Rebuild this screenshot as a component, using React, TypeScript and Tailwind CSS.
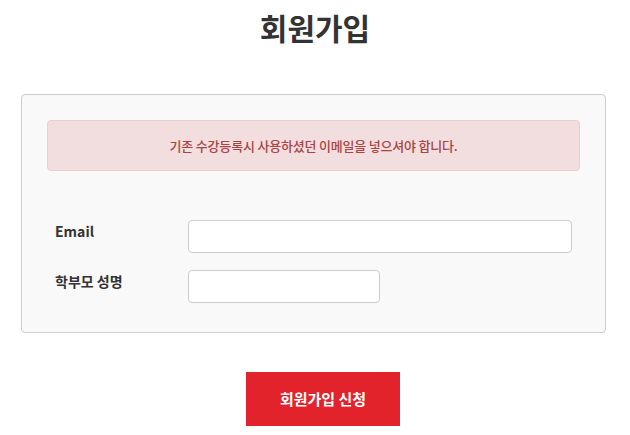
export default function App() {
  return (
    <div
      className="min-h-screen bg-white text-[#333]"
      style={{ fontFamily: '"Noto Sans CJK KR", "Noto Sans", sans-serif' }}
    >
      <h1 className="pt-[8px] text-center text-[30px] font-bold leading-[38px] text-[#333]">
        회원가입
      </h1>

      <div className="mx-[21px] mt-[48px] w-[585px] rounded-[4px] border border-[#cccccc] bg-[#f9f9f9] px-[25px] pb-[29px] pt-[25px]">
        <div className="flex h-[51px] items-center justify-center rounded-[4px] border border-[#ebccd1] bg-[#f2dede] text-[13px] font-medium tracking-[-0.2px] text-[#a94442]">
          기존 수강등록시 사용하셨던 이메일을 넣으셔야 합니다.
        </div>

        <div className="mt-[49px] flex flex-col gap-[17px] px-[8px]">
          <div className="flex items-start">
            <label className="w-[133px] text-[14px] font-bold leading-[22px]">Email</label>
            <input
              type="email"
              className="h-[33px] w-[384px] rounded-[4px] border border-[#cccccc] bg-white px-3 text-sm outline-none"
            />
          </div>
          <div className="flex items-start">
            <label className="w-[133px] text-[14px] font-bold leading-[22px]">학부모 성명</label>
            <input
              type="text"
              className="h-[33px] w-[192px] rounded-[4px] border border-[#cccccc] bg-white px-3 text-sm outline-none"
            />
          </div>
        </div>
      </div>

      <div className="mt-[39px] flex justify-center pl-[16px]">
        <button className="h-[54px] w-[154px] bg-[#e3232c] text-[15px] font-bold text-white">
          회원가입 신청
        </button>
      </div>
    </div>
  );
}
